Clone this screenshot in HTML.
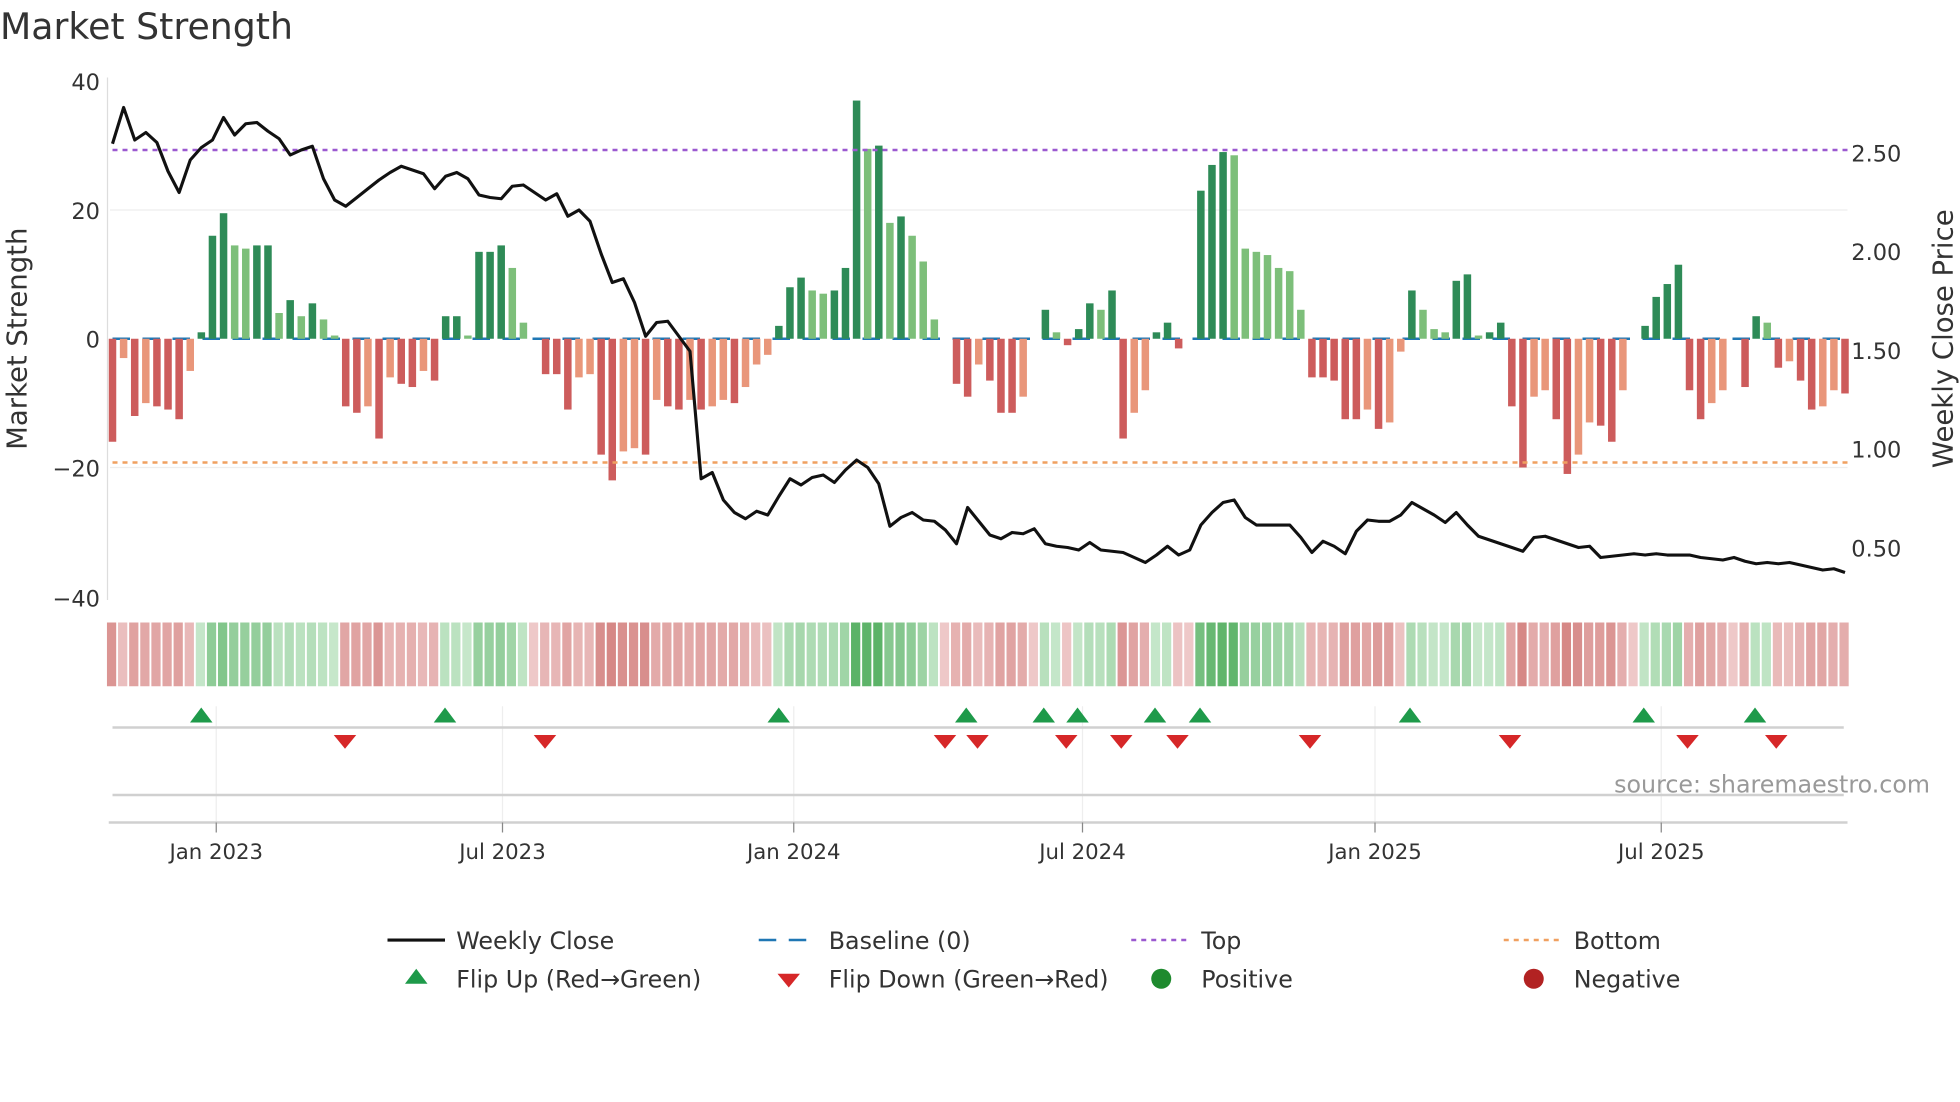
<!DOCTYPE html>
<html><head><meta charset="utf-8"><style>
html,body{margin:0;padding:0;background:#fff;width:1960px;height:1102px;overflow:hidden}
svg{display:block}
text{font-family:"DejaVu Sans","Liberation Sans",sans-serif;fill:#333}
</style></head><body>
<svg id="s" width="1960" height="1102" viewBox="0 0 1568 881.6" xmlns="http://www.w3.org/2000/svg">
<text x="0" y="31" font-size="29">Market Strength</text>
<g stroke="#eeeeee" stroke-width="1">
<line x1="88" y1="168" x2="1478" y2="168"/><line x1="88" y1="374" x2="1478" y2="374"/>
<line x1="173" y1="565" x2="173" y2="658"/><line x1="402" y1="565" x2="402" y2="658"/><line x1="635" y1="565" x2="635" y2="658"/>
<line x1="866" y1="565" x2="866" y2="658"/><line x1="1100" y1="565" x2="1100" y2="658"/><line x1="1329" y1="565" x2="1329" y2="658"/>
</g>
<line x1="86" y1="62" x2="86" y2="480" stroke="#ddd" stroke-width="1"/>
<g font-size="18" text-anchor="end">
<text x="80" y="72">40</text><text x="80" y="175">20</text><text x="80" y="278">0</text><text x="80" y="381">−20</text><text x="80" y="485">−40</text>
</g>
<g font-size="18">
<text x="1481" y="129">2.50</text><text x="1481" y="208">2.00</text><text x="1481" y="287">1.50</text><text x="1481" y="366">1.00</text><text x="1481" y="445">0.50</text>
</g>
<text transform="translate(21,271) rotate(-90)" font-size="22" text-anchor="middle">Market Strength</text>
<text transform="translate(1562,271) rotate(-90)" font-size="22" text-anchor="middle">Weekly Close Price</text>
<line x1="90" y1="271" x2="1478" y2="271" stroke="#1f77b4" stroke-width="2" stroke-dasharray="14,10"/>
<g id="bars"></g>
<line x1="90" y1="120" x2="1478" y2="120" stroke="#9b59d0" stroke-width="2" stroke-dasharray="4,4"/>
<line x1="90" y1="370" x2="1478" y2="370" stroke="#f0a060" stroke-width="2" stroke-dasharray="4,4"/>
<polyline id="price" fill="none" stroke="#111" stroke-width="2.5" stroke-linejoin="round"/>
<g id="heat"></g>
<line x1="90" y1="582" x2="1475" y2="582" stroke="#d0d0d0" stroke-width="2"/>
<line x1="90" y1="636" x2="1475" y2="636" stroke="#d0d0d0" stroke-width="2"/>
<line x1="87" y1="658" x2="1478" y2="658" stroke="#d0d0d0" stroke-width="2"/>
<g stroke="#888" stroke-width="1">
<line x1="173" y1="658" x2="173" y2="666"/><line x1="402" y1="658" x2="402" y2="666"/><line x1="635" y1="658" x2="635" y2="666"/>
<line x1="866" y1="658" x2="866" y2="666"/><line x1="1100" y1="658" x2="1100" y2="666"/><line x1="1329" y1="658" x2="1329" y2="666"/>
</g>
<g id="marks"></g>
<g font-size="17" text-anchor="middle">
<text x="173" y="687">Jan 2023</text><text x="402" y="687">Jul 2023</text><text x="635" y="687">Jan 2024</text>
<text x="866" y="687">Jul 2024</text><text x="1100" y="687">Jan 2025</text><text x="1329" y="687">Jul 2025</text>
</g>
<text x="1544" y="634" font-size="19" text-anchor="end" style="fill:#999">source: sharemaestro.com</text>
<g font-size="19">
<line x1="310" y1="752" x2="356" y2="752" stroke="#111" stroke-width="2.5"/><text x="365" y="759">Weekly Close</text>
<line x1="607" y1="752" x2="651" y2="752" stroke="#1f77b4" stroke-width="2" stroke-dasharray="14,10"/><text x="663" y="759">Baseline (0)</text>
<line x1="905" y1="752" x2="949" y2="752" stroke="#9b59d0" stroke-width="2" stroke-dasharray="4,4"/><text x="961" y="759">Top</text>
<line x1="1203" y1="752" x2="1247" y2="752" stroke="#f0a060" stroke-width="2" stroke-dasharray="4,4"/><text x="1259" y="759">Bottom</text>
<polygon points="324,787 342,787 333,775" fill="#1e9a4a"/><text x="365" y="790">Flip Up (Red→Green)</text>
<polygon points="622,779 640,779 631,790" fill="#d62728"/><text x="663" y="790">Flip Down (Green→Red)</text>
<circle cx="929" cy="783" r="8" fill="#1e8a2e"/><text x="961" y="790">Positive</text>
<circle cx="1227" cy="783" r="8" fill="#b22222"/><text x="1259" y="790">Negative</text>
</g>
</svg>
<script>
var V=[-16,-3,-12,-10,-10.5,-11,-12.5,-5,1,16,19.5,14.5,14,14.5,14.5,4,6,3.5,5.5,3,0.5,-10.5,-11.5,-10.5,-15.5,-6,-7,-7.5,-5,-6.5,3.5,3.5,0.5,13.5,13.5,14.5,11,2.5,0,-5.5,-5.5,-11,-6,-5.5,-18,-22,-17.5,-17,-18,-9.5,-10.5,-11,-9.5,-11,-10.5,-9.5,-10,-7.5,-4,-2.5,2,8,9.5,7.5,7,7.5,11,37,29.5,30,18,19,16,12,3,0,-7,-9,-4,-6.5,-11.5,-11.5,-9,0,4.5,1,-1,1.5,5.5,4.5,7.5,-15.5,-11.5,-8,1,2.5,-1.5,0,23,27,29,28.5,14,13.5,13,11,10.5,4.5,-6,-6,-6.5,-12.5,-12.5,-11,-14,-13,-2,7.5,4.5,1.5,1,9,10,0.5,1,2.5,-10.5,-20,-9,-8,-12.5,-21,-18,-13,-13.5,-16,-8,0,2,6.5,8.5,11.5,-8,-12.5,-10,-8,0,-7.5,3.5,2.5,-4.5,-3.5,-6.5,-11,-10.5,-8,-8.5];
var P=[115,86,112,106,114,137,154,128,118,112,94,108,99,98,105,111,124,120,117,143,160,165,158,151,144,138,133,136,139,151,141,138,143,156,158,159,149,148,154,160,155,173,168,177,203,226,223,242,269,258,257,269,281,383,378,400,410,415,409,412,397,383,388,382,380,386,376,368,374,387,421,414,410,416,417,424,435,406,417,428,431,426,427,423,435,437,438,440,434,440,441,442,446,450,444,437,444,440,420,410,402,400,414,420,420,420,420,430,442,433,437,443,425,416,417,417,412,402,407,412,418,410,420,429,432,435,438,441,430,429,432,435,438,437,446,445,444,443,444,443,444,444,444,446,447,448,446,449,451,450,451,450,452,454,456,455,458];
var NS="http://www.w3.org/2000/svg";
function el(t,a,p){var e=document.createElementNS(NS,t);for(var k in a)e.setAttribute(k,a[k]);p.appendChild(e);return e;}
var n=V.length,x0=90,x1=1476,st=(x1-x0)/(n-1),bars=document.getElementById('bars'),heat=document.getElementById('heat');
for(var i=0;i<n;i++){var v=V[i],pv=i?V[i-1]:0,x=x0+i*st,c;
 if(v>0)c=v>=pv?'#2e8b57':'#7dbf7a';else c=v<=pv?'#cd5c5c':'#e9967a';
 if(Math.abs(v)>0.2){var h=Math.abs(v)*5.15;el('rect',{x:x-3,y:v>0?271-h:271,width:6,height:h,fill:c},bars);}
 var a=Math.min(1,Math.abs(v)/30),hc;
 if(v>0){var r=Math.round(200-108*a),g=Math.round(232-53*a),b=Math.round(204-100*a);hc='rgb('+r+','+g+','+b+')';}
 else{var a2=Math.min(1,Math.abs(v)/20);var r=Math.round(238-24*a2),g=Math.round(200-64*a2),b=Math.round(200-66*a2);hc='rgb('+r+','+g+','+b+')';}
 el('rect',{x:x-st/2,y:498,width:st-1.5,height:51,fill:hc},heat);}
var pts=[];for(var i=0;i<P.length;i++)pts.push((x0+i*(x1-x0)/(P.length-1)).toFixed(1)+','+P[i]);
document.getElementById('price').setAttribute('points',pts.join(' '));
var m=document.getElementById('marks');
[161,356,623,773,835,862,924,960,1128,1315,1404].forEach(function(x){el('polygon',{points:(x-9)+',578 '+(x+9)+',578 '+x+',566',fill:'#1e9a4a'},m);});
[276,436,756,782,853,897,942,1048,1208,1350,1421].forEach(function(x){el('polygon',{points:(x-9)+',588 '+(x+9)+',588 '+x+',599',fill:'#d62728'},m);});
</script>
</body></html>
